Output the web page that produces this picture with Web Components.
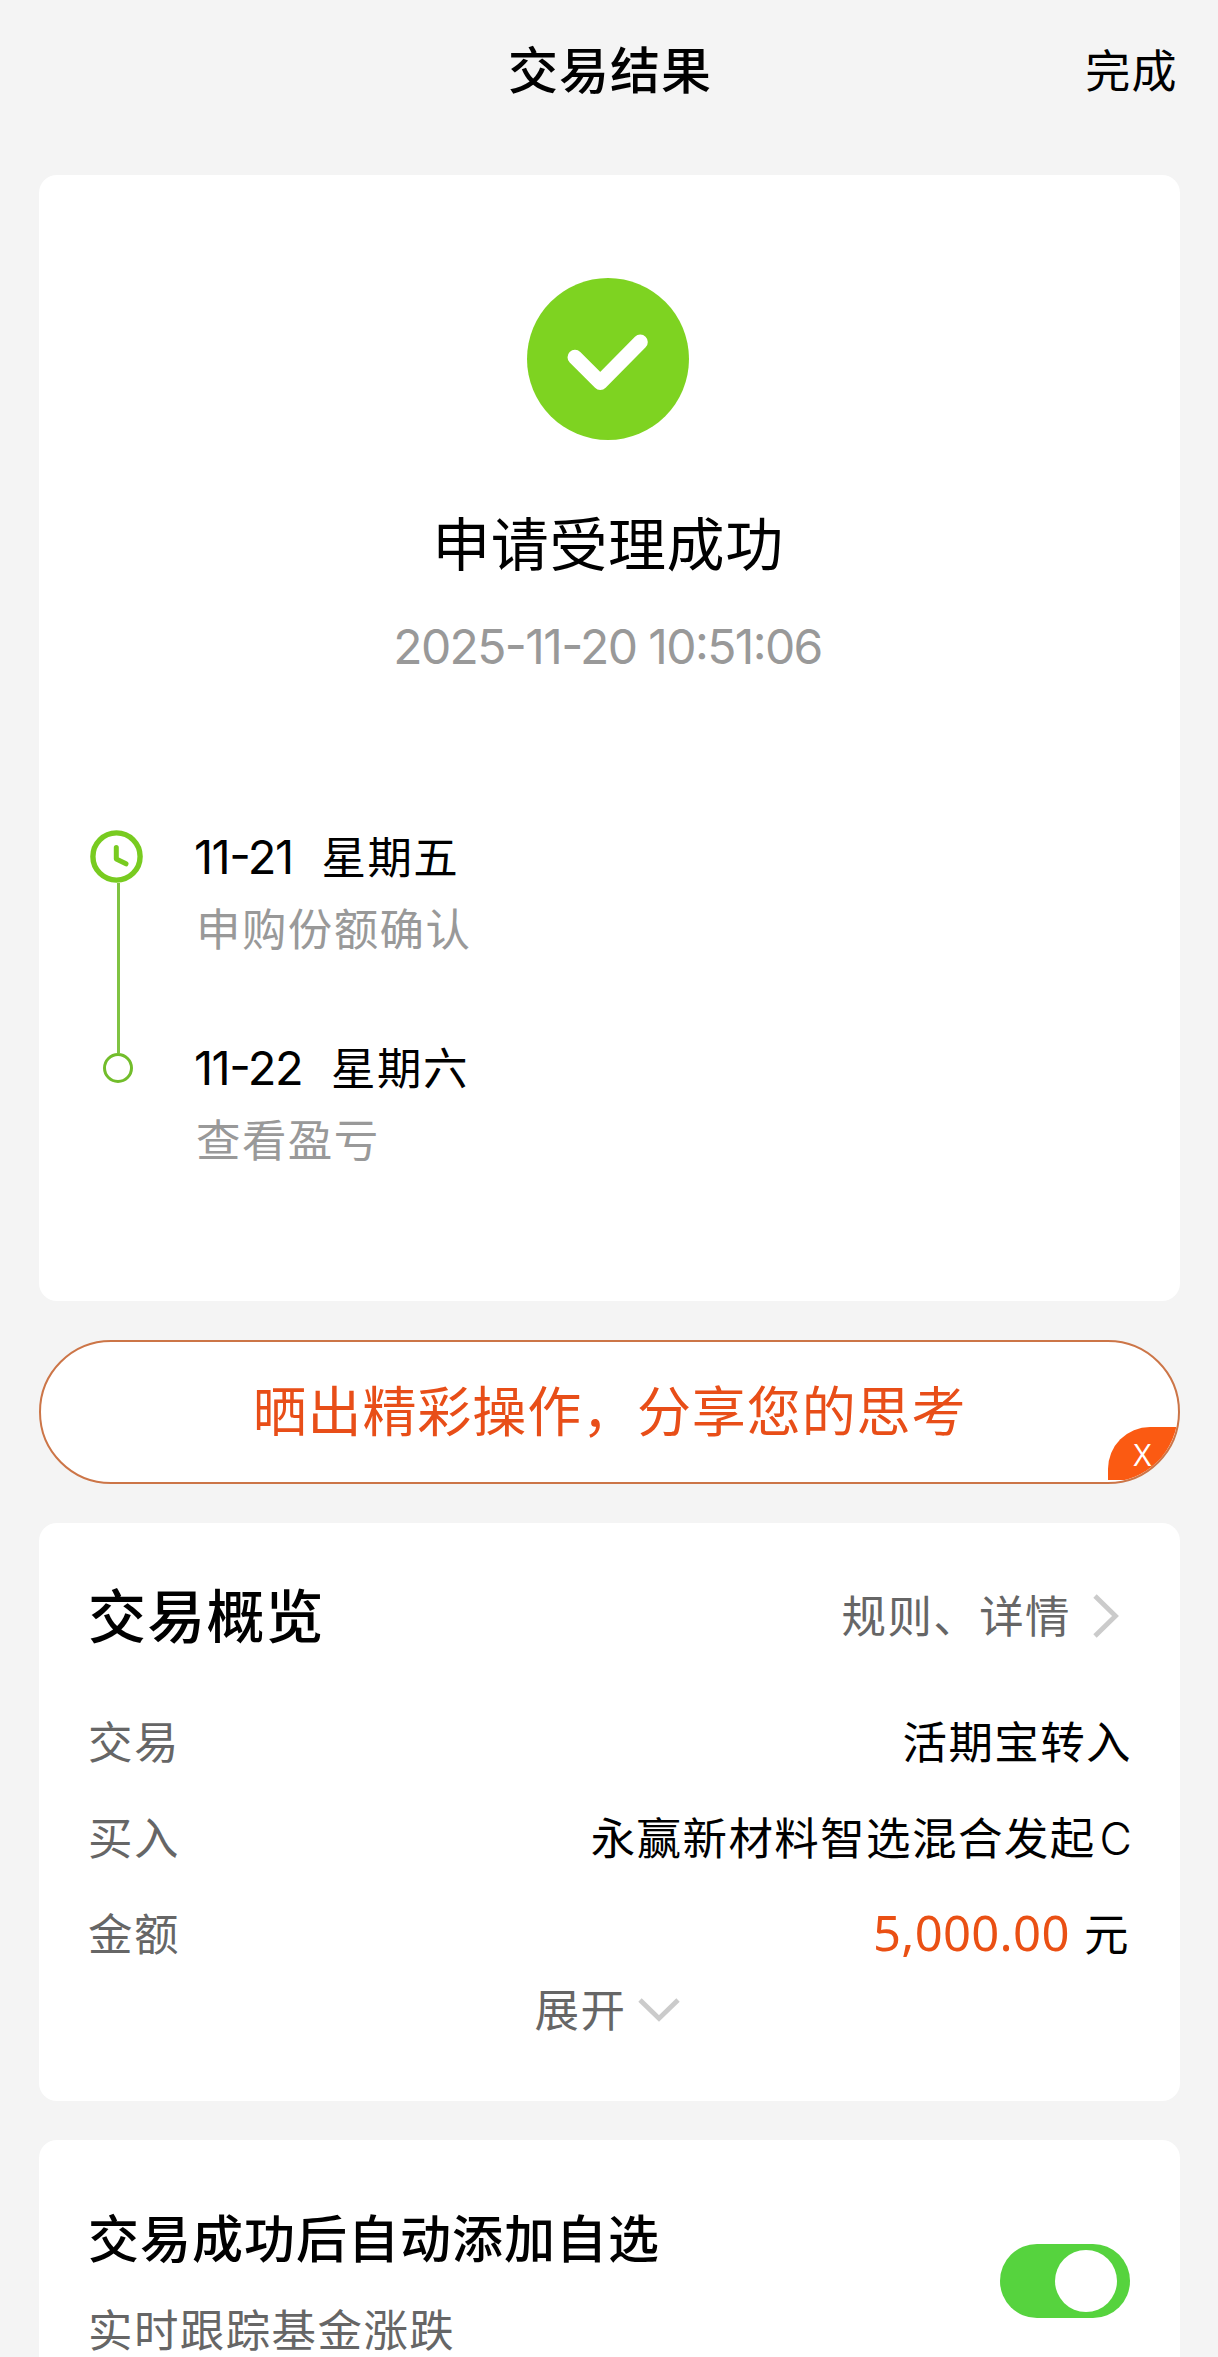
<!DOCTYPE html>
<html lang="zh-CN">
<head>
<meta charset="utf-8">
<title>交易结果</title>
<style>
  body {
    margin: 0;
    height: 2357px;
    overflow: hidden;
    background: #f4f4f4;
    color: #000;
    font-family: "Noto Sans CJK SC", sans-serif;
    font-size: 44.5px;
    line-height: 60px;
    letter-spacing: 1.4px;
  }
</style>
</head>
<body>
<trade-result></trade-result>

<script>
class PageHeader extends HTMLElement {
  constructor() {
    super();
    this.attachShadow({ mode: "open" });
  }

  connectedCallback() {
    this.shadowRoot.innerHTML = `
      <style>
        :host {
          display: grid;
          grid-template-columns: 1fr auto 1fr;
          align-items: center;
          height: 133px;
          padding: 0 40px 0 42px;
        }
        .title {
          grid-column: 2;
          font-size: 50px;
          font-weight: 500;
          letter-spacing: 1px;
        }
        .action {
          justify-self: end;
          padding-top: 4px;
          font-size: 45px;
        }
      </style>
      <div class="title"><slot></slot></div>
      <div class="action"><slot name="action"></slot></div>
    `;
  }
}

class InfoCard extends HTMLElement {
  constructor() {
    super();
    this.attachShadow({ mode: "open" });
  }

  connectedCallback() {
    this.shadowRoot.innerHTML = `
      <style>
        :host {
          display: block;
          box-sizing: border-box;
          background: #fff;
          border-radius: 18px;
        }
      </style>
      <slot></slot>
    `;
  }
}

class ResultStatus extends HTMLElement {
  constructor() {
    super();
    this.attachShadow({ mode: "open" });
  }

  connectedCallback() {
    this.shadowRoot.innerHTML = `
      <style>
        :host {
          display: flex;
          flex-direction: column;
          align-items: center;
        }
        svg {
          width: 162px;
          height: 162px;
          margin-right: 3px;
        }
        .title {
          margin: 61px 3px 0 0;
          font-size: 58px;
          line-height: 80px;
          letter-spacing: 0.6px;
        }
        .time {
          margin: 36px 4px 0 0;
          color: #999;
          font-family: Inter, sans-serif;
          font-feature-settings: "case";
          font-size: 48px;
          font-weight: 380;
          letter-spacing: -1.6px;
        }
      </style>
      <svg viewBox="0 0 162 162">
        <circle cx="81" cy="81" r="81" fill="#7ed321"/>
        <path d="M48 79.3 73.3 104.5 113.3 64" fill="none" stroke="#fff" stroke-width="15" stroke-linecap="round" stroke-linejoin="round"/>
      </svg>
      <div class="title"><slot></slot></div>
      <div class="time"><slot name="time"></slot></div>
    `;
  }
}

class StatusTimeline extends HTMLElement {
  constructor() {
    super();
    this.attachShadow({ mode: "open" });
  }

  connectedCallback() {
    this.shadowRoot.innerHTML = `
      <style>
        :host {
          display: flex;
          gap: 51px;
        }
        .rail {
          display: flex;
          flex-direction: column;
          align-items: center;
          width: 56px;
          padding-top: 5px;
        }
        .clock {
          width: 53px;
          height: 53px;
          margin-right: 1px;
        }
        .line {
          width: 3px;
          height: 170px;
          margin-left: 2px;
          background: #80c342;
        }
        .dot {
          box-sizing: border-box;
          width: 30px;
          height: 30px;
          margin-left: 2px;
          border: 3px solid #72bd2b;
          border-radius: 50%;
        }
        .steps {
          display: flex;
          flex-direction: column;
          gap: 79px;
        }
      </style>
      <div class="rail">
        <svg class="clock" viewBox="0 0 53 53" fill="none" stroke="#78cb20">
          <circle cx="26.5" cy="26.5" r="23.6" stroke-width="5.4"/>
          <path d="M26.3 17.5V29L36 33.8" stroke-width="5" stroke-linecap="round" stroke-linejoin="round"/>
        </svg>
        <div class="line"></div>
        <div class="dot"></div>
      </div>
      <div class="steps"><slot></slot></div>
    `;
  }
}

class TimelineStep extends HTMLElement {
  constructor() {
    super();
    this.attachShadow({ mode: "open" });
  }

  connectedCallback() {
    this.shadowRoot.innerHTML = `
      <style>
        :host {
          display: block;
        }
        .when {
          display: flex;
          align-items: baseline;
          gap: 29px;
          height: 60px;
          margin-left: -2px;
        }
        .date {
          font-family: Inter, sans-serif;
          font-feature-settings: "case";
          font-size: 47px;
          font-weight: 400;
          letter-spacing: -1.5px;
        }
        .note {
          margin-top: 12px;
          color: #999;
        }
      </style>
      <div class="when">
        <span class="date">${this.getAttribute("date")}</span>
        <span>${this.getAttribute("day")}</span>
      </div>
      <div class="note"><slot></slot></div>
    `;
  }
}

class ShareBanner extends HTMLElement {
  constructor() {
    super();
    this.attachShadow({ mode: "open" });
  }

  connectedCallback() {
    this.shadowRoot.innerHTML = `
      <style>
        :host {
          position: relative;
          display: flex;
          align-items: center;
          justify-content: center;
          box-sizing: border-box;
          height: 144px;
          border: 2px solid #cc7547;
          border-radius: 72px;
          background: #fff;
          overflow: hidden;
          color: #e84e18;
          font-size: 54px;
          letter-spacing: 0.9px;
        }
        .text {
          padding-bottom: 6px;
        }
        .close {
          position: absolute;
          right: 0;
          bottom: 2px;
          display: flex;
          align-items: center;
          justify-content: center;
          box-sizing: border-box;
          width: 70px;
          height: 53px;
          border-radius: 42px 0 0 0;
          background: #fb5a12;
          color: #fff;
          font-family: "Open Sans", sans-serif;
          font-size: 31px;
          font-weight: 400;
        }
      </style>
      <div class="text"><slot></slot></div>
      <div class="close">X</div>
    `;
  }
}

class ChevronIcon extends HTMLElement {
  constructor() {
    super();
    this.attachShadow({ mode: "open" });
  }

  connectedCallback() {
    const down = this.hasAttribute("down");
    this.shadowRoot.innerHTML = `
      <style>
        :host {
          display: block;
          width: ${down ? 42 : 27}px;
          height: ${down ? 26 : 44}px;
          padding-top: 4px;
        }
        svg {
          display: block;
        }
      </style>
      <svg width="100%" height="100%" fill="none" stroke="#cbcbcb" stroke-width="4.8">
        <path d="${down ? "M2 3 21 21.5 40 3" : "M2 2 22.5 22 2 42"}"/>
      </svg>
    `;
  }
}

class InfoRow extends HTMLElement {
  constructor() {
    super();
    this.attachShadow({ mode: "open" });
  }

  connectedCallback() {
    this.shadowRoot.innerHTML = `
      <style>
        :host {
          display: flex;
          justify-content: space-between;
          height: 60px;
        }
        .label {
          color: #666;
        }
      </style>
      <div class="label">${this.getAttribute("label")}</div>
      <div class="value"><slot></slot></div>
    `;
  }
}

class ToggleSwitch extends HTMLElement {
  constructor() {
    super();
    this.attachShadow({ mode: "open" });
  }

  connectedCallback() {
    this.shadowRoot.innerHTML = `
      <style>
        :host {
          display: flex;
          align-items: center;
          justify-content: flex-end;
          box-sizing: border-box;
          width: 130px;
          height: 74px;
          padding-right: 13px;
          border-radius: 37px;
          background: #56d33e;
        }
        .knob {
          width: 62px;
          height: 62px;
          border-radius: 50%;
          background: #fff;
        }
      </style>
      <div class="knob"></div>
    `;
  }
}

class TradeResult extends HTMLElement {
  constructor() {
    super();
    this.attachShadow({ mode: "open" });
  }

  get styles() {
    return `
      :host {
        display: block;
      }
      main {
        display: flex;
        flex-direction: column;
        gap: 39px;
        margin: 42px 38px 0 39px;
      }
      .status {
        height: 1126px;
        padding-top: 103px;
      }
      status-timeline {
        margin: 148px 0 0 50px;
      }
      .overview {
        height: 578px;
        padding: 50px 48px 0 49px;
      }
      .heading {
        display: flex;
        align-items: center;
        justify-content: space-between;
        height: 80px;
      }
      .heading h2 {
        margin: 0;
        font-size: 58px;
        font-weight: 500;
        letter-spacing: 1.2px;
      }
      .more {
        display: flex;
        align-items: center;
        gap: 22px;
        padding: 2px 12px 0 0;
        color: #666;
      }
      .rows {
        display: flex;
        flex-direction: column;
        gap: 36px;
        margin-top: 57px;
      }
      .latin {
        margin-left: 4px;
        font-family: Inter, sans-serif;
        font-weight: 350;
        letter-spacing: 0;
      }
      .amount {
        margin-right: 3px;
        color: #ea5014;
        font-family: "Noto Sans", sans-serif;
        font-size: 49px;
        letter-spacing: 0.3px;
      }
      .unit {
        margin-right: 2px;
      }
      .expand {
        display: flex;
        align-items: center;
        justify-content: center;
        gap: 12px;
        margin-top: 16px;
        padding-right: 5px;
        color: #666;
      }
      .watch {
        height: 260px;
        padding: 66px 50px 0 49px;
      }
      .watch-row {
        display: flex;
        justify-content: space-between;
      }
      .watch h3 {
        margin: 0 0 32px;
        font-size: 51px;
        font-weight: 500;
        letter-spacing: 1px;
      }
      .hint {
        color: #666;
      }
      toggle-switch {
        margin-top: 38px;
      }
    `;
  }

  connectedCallback() {
    this.shadowRoot.innerHTML = `
      <style>${this.styles}</style>
      <page-header>交易结果<span slot="action">完成</span></page-header>
      <main>
        <info-card class="status">
          <result-status>申请受理成功<span slot="time">2025-11-20 10:51:06</span></result-status>
          <status-timeline>
            <timeline-step date="11-21" day="星期五">申购份额确认</timeline-step>
            <timeline-step date="11-22" day="星期六">查看盈亏</timeline-step>
          </status-timeline>
        </info-card>
        <share-banner>晒出精彩操作，分享您的思考</share-banner>
        <info-card class="overview">
          <div class="heading">
            <h2>交易概览</h2>
            <div class="more">规则、详情<chevron-icon></chevron-icon></div>
          </div>
          <div class="rows">
            <info-row label="交易">活期宝转入</info-row>
            <info-row label="买入">永赢新材料智选混合发起<span class="latin">C</span></info-row>
            <info-row label="金额"><span class="amount">5,000.00</span> <span class="unit">元</span></info-row>
          </div>
          <div class="expand">展开<chevron-icon down></chevron-icon></div>
        </info-card>
        <info-card class="watch">
          <div class="watch-row">
            <div>
              <h3>交易成功后自动添加自选</h3>
              <div class="hint">实时跟踪基金涨跌</div>
            </div>
            <toggle-switch></toggle-switch>
          </div>
        </info-card>
      </main>
    `;
  }
}

customElements.define("page-header", PageHeader);
customElements.define("info-card", InfoCard);
customElements.define("result-status", ResultStatus);
customElements.define("status-timeline", StatusTimeline);
customElements.define("timeline-step", TimelineStep);
customElements.define("share-banner", ShareBanner);
customElements.define("chevron-icon", ChevronIcon);
customElements.define("info-row", InfoRow);
customElements.define("toggle-switch", ToggleSwitch);
customElements.define("trade-result", TradeResult);
</script>
</body>
</html>
